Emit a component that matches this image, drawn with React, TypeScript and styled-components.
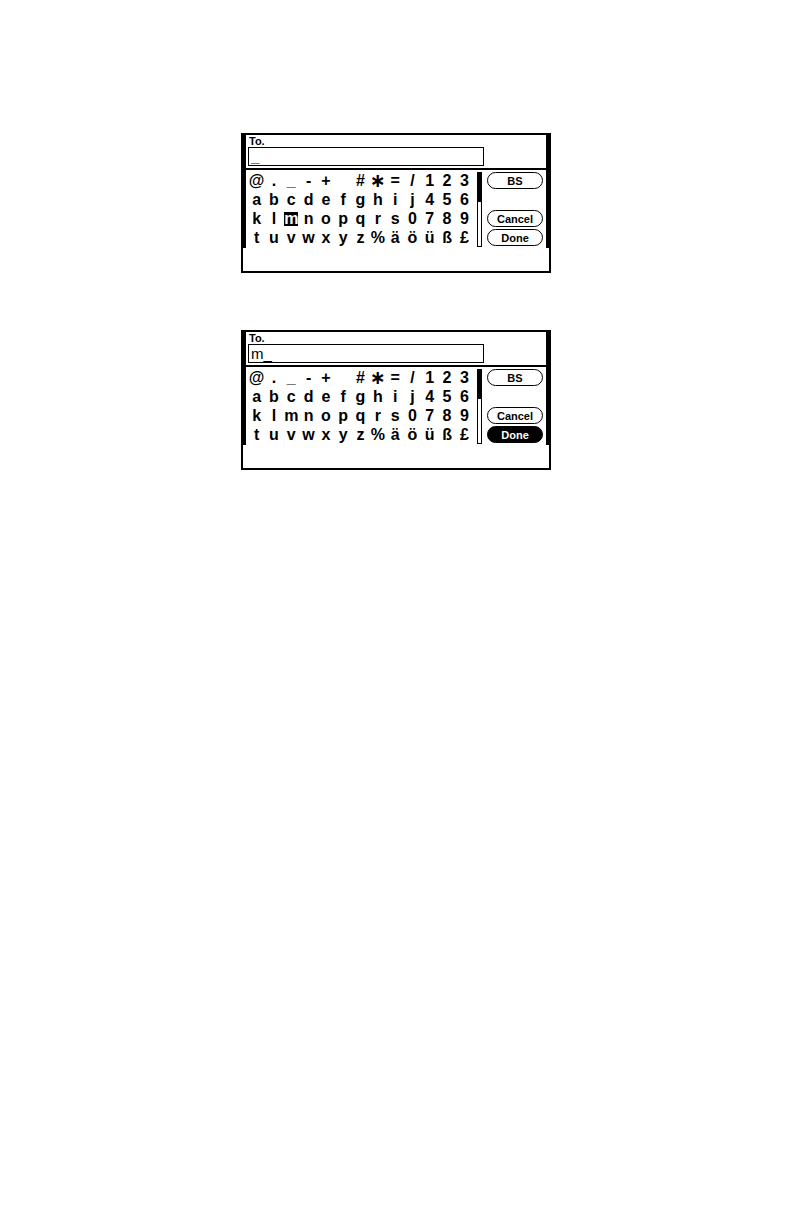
import React from 'react'
import styled, { createGlobalStyle } from 'styled-components'

const GlobalStyle = createGlobalStyle`
    html, body {
        margin: 0;
        padding: 0;
        background: #fff;
    }
    body {
        font-family: 'Liberation Sans', Arial, sans-serif;
        color: #000;
    }
`

const KEYS = [
    ['@', '.', '_', '-', '+', '', '#', '∗', '=', '/', '1', '2', '3'],
    ['a', 'b', 'c', 'd', 'e', 'f', 'g', 'h', 'i', 'j', '4', '5', '6'],
    ['k', 'l', 'm', 'n', 'o', 'p', 'q', 'r', 's', '0', '7', '8', '9'],
    ['t', 'u', 'v', 'w', 'x', 'y', 'z', '%', 'ä', 'ö', 'ü', 'ß', '£'],
]

const Page = styled.div`
    display: flex;
    flex-direction: column;
    gap: 57px;
    padding: 133px 0 0 241px;
`

const Frame = styled.div`
    width: 310px;
    height: 140px;
    box-sizing: border-box;
    border: 2px solid #000;
    display: flex;
    flex-direction: column;
`

const Screen = styled.div`
    height: 113px;
    border-left: 3px solid #000;
    border-right: 3px solid #000;
    display: flex;
    flex-direction: column;
`

const Label = styled.div`
    font-size: 11px;
    font-weight: 700;
    line-height: 11px;
    height: 13px;
    padding: 1px 0 0 3px;
`

const InputBox = styled.div<{ $bold?: boolean }>`
    margin-left: 2px;
    width: 236px;
    height: 20px;
    box-sizing: border-box;
    border: 1px solid #000;
    padding: 1px 0 0 2px;
    font-size: 15px;
    line-height: 16px;
    font-weight: ${(p) => (p.$bold ? 700 : 400)};
    white-space: pre;
`

const Separator = styled.div`
    height: 2px;
    margin-top: 2px;
    background: #000;
`

const Body = styled.div`
    flex: 1;
    display: flex;
    padding-left: 2px;
`

const KeyGrid = styled.div`
    width: 225px;
    padding-top: 1px;
    display: grid;
    grid-template-columns: repeat(13, 1fr);
    grid-template-rows: repeat(4, 19.25px);
`

const Key = styled.div<{ $selected?: boolean }>`
    display: flex;
    align-items: center;
    justify-content: center;
    font-size: 16px;
    font-weight: 700;
    line-height: 1;

    span {
        display: flex;
        align-items: center;
        justify-content: center;
        width: 14px;
        height: 14px;
        background: ${(p) => (p.$selected ? '#000' : 'transparent')};
        color: ${(p) => (p.$selected ? '#fff' : '#000')};
    }
`

const Star = styled.span`
    font-family: 'DejaVu Sans', sans-serif;
    font-size: 19px;
`

const ScrollTrack = styled.div`
    margin: 2px 0 1px 4px;
    width: 5px;
    box-sizing: border-box;
    border: 1px solid #000;
    display: flex;
    flex-direction: column;
`

const ScrollThumb = styled.div`
    height: 29px;
    background: #000;
`

const ButtonColumn = styled.div`
    margin-left: 5px;
    padding-top: 2px;
    display: flex;
    flex-direction: column;
`

const PillButton = styled.div<{ $active?: boolean; $gap?: number }>`
    width: 56px;
    height: 17px;
    box-sizing: border-box;
    margin-top: ${(p) => p.$gap ?? 0}px;
    border: 1px solid #000;
    border-radius: 9px;
    display: flex;
    align-items: center;
    justify-content: center;
    font-size: 11px;
    font-weight: 700;
    background: ${(p) => (p.$active ? '#000' : '#fff')};
    color: ${(p) => (p.$active ? '#fff' : '#000')};
`

type PanelProps = {
    value: string
    boldValue?: boolean
    selected?: string
    activeButton?: string
}

const Panel = ({ value, boldValue, selected, activeButton }: PanelProps) => (
    <Frame>
        <Screen>
            <Label>To.</Label>
            <InputBox $bold={boldValue}>{value}</InputBox>
            <Separator />
            <Body>
                <KeyGrid>
                    {KEYS.flat().map((k, i) => (
                        <Key key={i} $selected={k === selected}>
                            {k === '∗' ? <Star>{k}</Star> : <span>{k}</span>}
                        </Key>
                    ))}
                </KeyGrid>
                <ScrollTrack>
                    <ScrollThumb />
                </ScrollTrack>
                <ButtonColumn>
                    <PillButton $active={activeButton === 'BS'}>BS</PillButton>
                    <PillButton $gap={21} $active={activeButton === 'Cancel'}>
                        Cancel
                    </PillButton>
                    <PillButton $gap={2} $active={activeButton === 'Done'}>
                        Done
                    </PillButton>
                </ButtonColumn>
            </Body>
        </Screen>
    </Frame>
)

const App = () => (
    <>
        <GlobalStyle />
        <Page>
            <Panel value="_" boldValue selected="m" />
            <Panel value="m_" activeButton="Done" />
        </Page>
    </>
)

export default App
